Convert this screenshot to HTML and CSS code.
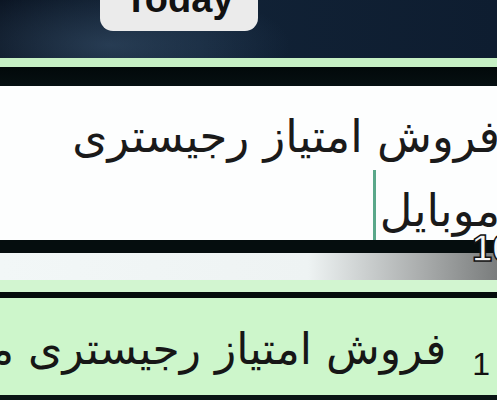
FILE: index.html
```html
<!DOCTYPE html>
<html lang="fa">
<head>
<meta charset="utf-8">
<link rel="stylesheet" href="styles.css">
</head>
<body>
<div class="screen">
  <div class="top">
    <div class="pill"><span>Today</span></div>
  </div>
  <div class="stripe-green"></div>
  <div class="band-dark"></div>
  <div class="compose">
    <p class="compose-text">فروش امتیاز رجیستری<br>موبایل<span class="cursor"></span></p>
  </div>
  <div class="band-black">
    <span class="big-one">10</span>
  </div>
  <div class="fade"></div>
  <div class="stripe-green2"></div>
  <div class="line-black"></div>
  <div class="bubble">
    <span class="count">1</span>
    <p class="bubble-text">فروش امتیاز رجیستری موبایل</p>
  </div>
  <div class="line-bottom"></div>
</div>
</body>
</html>
```
FILE: styles.css
```css
html, body {
  margin: 0;
  padding: 0;
  width: 497px;
  height: 400px;
  overflow: hidden;
  background: #0c1826;
}
.screen {
  width: 497px;
  height: 400px;
  overflow: hidden;
  display: flex;
  flex-direction: column;
  font-family: "DejaVu Sans", sans-serif;
}
.top {
  height: 58px;
  flex: none;
  background:
    radial-gradient(ellipse 180px 60px at 110px 45px, rgba(70, 100, 130, 0.45), transparent),
    linear-gradient(90deg, #0a1422 0%, #112236 40%, #0e1d30 100%);
  padding-left: 100px;
}
.pill {
  width: 158px;
  height: 31px;
  background: #ebebeb;
  border-radius: 0 0 13px 13px;
  overflow: hidden;
  display: flex;
  justify-content: center;
  align-items: flex-end;
}
.pill span {
  font-family: "Liberation Sans", sans-serif;
  font-weight: bold;
  font-size: 38px;
  line-height: 1;
  color: #111;
  margin-bottom: 13px;
}
.stripe-green {
  height: 9px;
  flex: none;
  background: #c6f0c4;
}
.band-dark {
  height: 19px;
  flex: none;
  background: linear-gradient(180deg, #02090a, #061012);
}
.compose {
  height: 154px;
  flex: none;
  background: #fdfefe;
  overflow: hidden;
  display: flex;
  justify-content: flex-end;
}
.compose-text {
  margin: 0 -3px 0 0;
  padding-top: 18px;
  direction: rtl;
  text-align: right;
  font-size: 45px;
  line-height: 66px;
  color: #1a1a1a;
  white-space: nowrap;
}
.cursor {
  display: inline-block;
  width: 3px;
  height: 70px;
  margin-right: 4px;
  background: #5aa88a;
  vertical-align: -14px;
}
.band-black {
  height: 13px;
  flex: none;
  background: #050d0e;
  position: relative;
  z-index: 2;
}
.big-one {
  position: absolute;
  left: 472px;
  top: -9px;
  font-family: "Liberation Sans", sans-serif;
  font-weight: bold;
  font-size: 36px;
  line-height: 1;
  color: #f6f6f6;
  -webkit-text-stroke: 1.5px #111;
  white-space: nowrap;
}
.fade {
  height: 27px;
  flex: none;
  background: linear-gradient(90deg, #f2f7f7 0%, #eef3f3 62%, #a9acac 85%, #7a7d7d 100%);
}
.stripe-green2 {
  height: 12px;
  flex: none;
  background: #d2f5d0;
}
.line-black {
  height: 6px;
  flex: none;
  background: #050c0c;
}
.bubble {
  height: 97px;
  flex: none;
  background: #cdf6cb;
  display: flex;
  flex-direction: row-reverse;
  justify-content: flex-start;
  align-items: flex-start;
  overflow: hidden;
}
.count {
  flex: none;
  font-family: "Liberation Sans", sans-serif;
  font-size: 32px;
  line-height: 1;
  color: #111;
  margin: 50px 7px 0 26px;
}
.bubble-text {
  margin: 0;
  padding-top: 21px;
  direction: rtl;
  white-space: nowrap;
  font-size: 44px;
  line-height: 60px;
  color: #161616;
}
.line-bottom {
  height: 5px;
  flex: none;
  background: #0a1414;
}
```
